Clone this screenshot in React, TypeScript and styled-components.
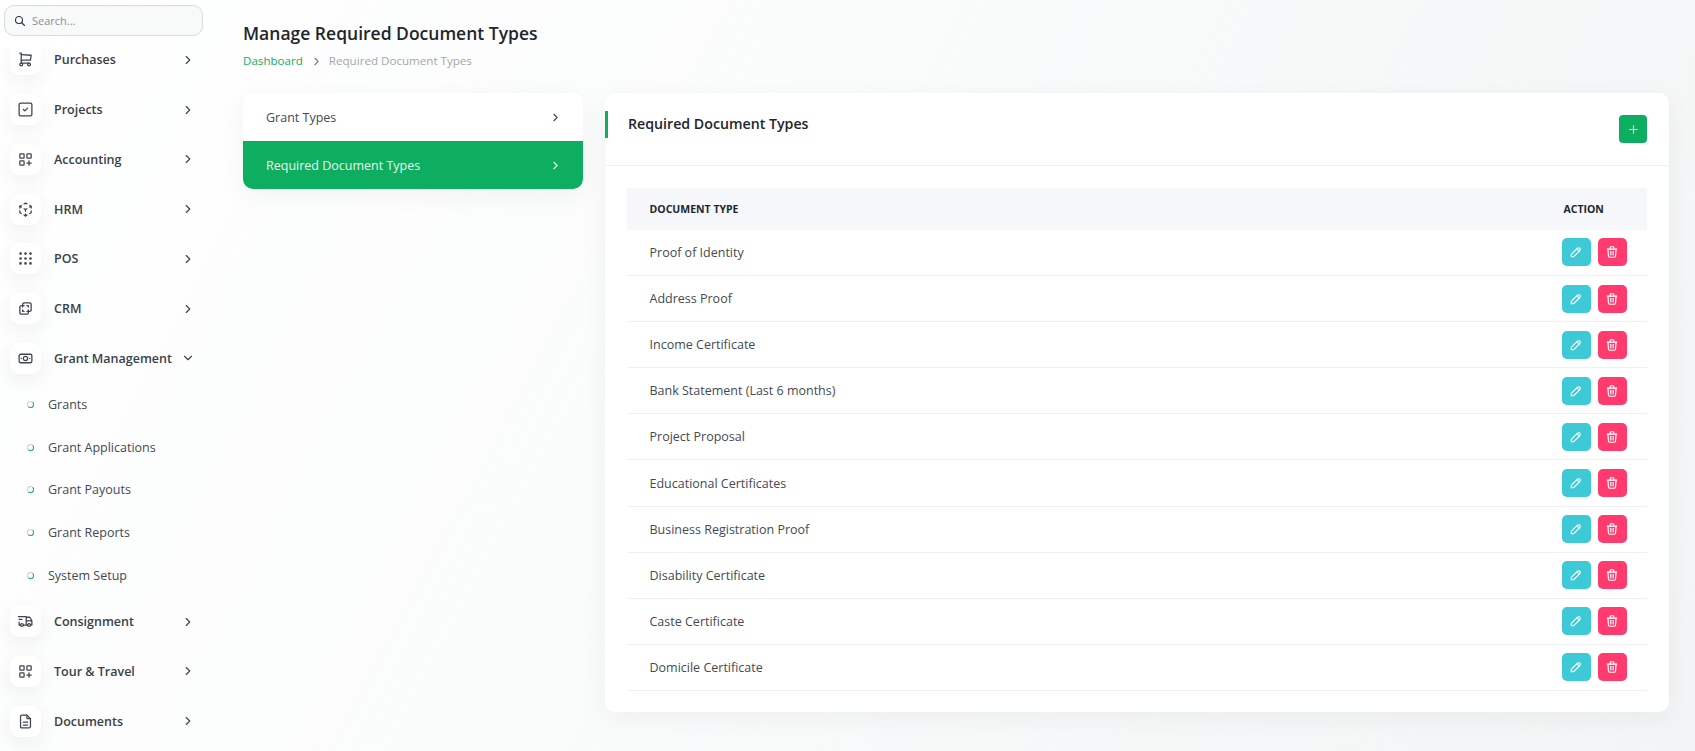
import React from "react";
import styled, { createGlobalStyle } from "styled-components";
import {
  TbShoppingCart, TbSquareCheck, TbLayoutGridAdd, TbCube3dSphere, TbGridDots, TbLayersDifference,
  TbCashBanknote, TbTruckDelivery, TbFileDescription, TbChevronRight, TbChevronDown, TbSearch,
  TbPencil, TbTrash, TbPlus,
} from "react-icons/tb";

const Global = createGlobalStyle`
  html, body { margin: 0; padding: 0; height: 100%; }
  body { font-family: "Open Sans", sans-serif; color: #293240; overflow: hidden; }
  * { box-sizing: border-box; }
`;

const Page = styled.div`
  width: 1695px; height: 751px; display: flex; overflow: hidden;
  background: linear-gradient(118deg, #ffffff 0%, #fafbfb 42%, #f2f4f5 100%);
`;
const Sidebar = styled.aside`
  width: 243px; flex: none; height: 751px; display: flex; flex-direction: column; padding-top: 5px;
`;
const SearchBox = styled.div`
  margin-left: 4px; width: 199px; height: 31px; flex: none; display: flex; align-items: center; gap: 6px; padding-left: 9px;
  border: 1px solid #d8dadb; border-radius: 10px; background: #f8f9f9; color: #8a9096; font-size: 11px;
  svg { color: #293240; }
`;
const NavClip = styled.div`
  flex: 1; overflow: hidden; margin-top: 12px;
`;
const Nav = styled.nav`
  margin-top: -13px; display: flex; flex-direction: column;
`;
const NavRow = styled.div`
  height: 49.75px; display: flex; align-items: center; padding-left: 10px; position: relative;
`;
const IconBox = styled.span`
  width: 31px; height: 31px; flex: none; border-radius: 9px; background: #fff; display: flex; align-items: center; justify-content: center;
  box-shadow: 0 6px 20px rgba(40, 50, 60, 0.07); color: #3f4650;
`;
const NavLabel = styled.span`
  margin-left: 13px; font-size: 12.5px; font-weight: 600; color: #3a4048; width: 127px; white-space: nowrap;
`;
const Caret = styled.span`
  display: flex; color: #3f4650;
`;
const SubList = styled.div`
  display: flex; flex-direction: column;
`;
const SubRow = styled.div`
  height: 42.7px; display: flex; align-items: center; padding-left: 27px; font-size: 12.5px; color: #444a52; gap: 14px;
`;
const Bullet = styled.span`
  width: 7px; height: 7px; flex: none; border-radius: 50%; border: 1.5px solid #c9d0cd; border-bottom-color: #12ad5f; border-right-color: #12ad5f;
`;
const Main = styled.main`
  flex: 1; padding: 21px 26px 0 0; min-width: 0;
`;
const Title = styled.h1`
  margin: 0; font-size: 17.5px; line-height: 24px; font-weight: 600; color: #22262c;
`;
const Crumbs = styled.div`
  display: flex; align-items: center; margin-top: 8px; font-size: 11.6px; line-height: 16px; color: #a3a8ad;
`;
const CrumbLink = styled.span`
  color: #12ad5f;
`;
const CrumbSep = styled.span`
  display: flex; margin: 0 6px 0 7px; color: #777d83;
`;
const Columns = styled.div`
  display: flex; gap: 22px; margin-top: 24px; align-items: flex-start;
`;
const Tabs = styled.div`
  width: 340px; flex: none; border-radius: 10px; overflow: hidden; background: #fff;
  box-shadow: 0 6px 24px rgba(40, 50, 60, 0.05);
`;
const Tab = styled.div<{ $active?: boolean }>`
  height: 48px; display: flex; align-items: center; justify-content: space-between; padding: 0 21px 0 23px;
  font-size: 12.5px; background: ${(p) => (p.$active ? "#0eae60" : "#fff")}; color: ${(p) => (p.$active ? "#e5f6ed" : "#444a52")};
  svg { color: ${(p) => (p.$active ? "#e5f6ed" : "#3f4650")}; }
`;
const Card = styled.section`
  flex: 1; min-width: 0; height: 619px; background: #fff; border-radius: 10px;
  box-shadow: 0 6px 24px rgba(40, 50, 60, 0.05);
`;
const CardHead = styled.header`
  height: 73px; display: flex; justify-content: space-between; padding: 22px 22px 0 23px; position: relative; border-bottom: 1px solid #f0f1f2;
  &::before { content: ""; position: absolute; left: 0; top: 18px; width: 3px; height: 27px; background: #12ad5f; }
`;
const CardTitle = styled.h2`
  margin: 0; font-size: 14.2px; line-height: 18px; font-weight: 600; color: #22262c;
`;
const AddButton = styled.button`
  width: 28px; height: 28px; border: 0; padding: 0; border-radius: 4px; background: #0eae60; color: #e9f8f0;
  display: flex; align-items: center; justify-content: center;
`;
const TableWrap = styled.div`
  padding: 21.5px 22px 0;
`;
const Table = styled.table`
  width: 100%; border-collapse: collapse;
`;
const Th = styled.th<{ $action?: boolean }>`
  height: 42px; padding: 0 0 0 ${(p) => (p.$action ? "24.5px" : "22.5px")}; text-align: left; background: #f6f7fa; font-size: 10.5px; font-weight: 700; color: #22262c;
  text-transform: uppercase; width: ${(p) => (p.$action ? "108px" : "auto")};
`;
const Row = styled.tr`
  height: 46.1px; border-bottom: 1px solid #f0f1f2;
`;
const Td = styled.td`
  padding: 0 0 0 22.5px; font-size: 12.5px; color: #444a52;
`;
const Actions = styled.div`
  display: flex; gap: 7px;
`;
const ActionButton = styled.button<{ $tone: string }>`
  width: 29px; height: 28px; padding: 0; border: 0; border-radius: 5px; background: ${(p) => p.$tone}; color: #fff;
  display: flex; align-items: center; justify-content: center;
`;

const before = [
  ["Purchases", TbShoppingCart], ["Projects", TbSquareCheck], ["Accounting", TbLayoutGridAdd],
  ["HRM", TbCube3dSphere], ["POS", TbGridDots], ["CRM", TbLayersDifference],
] as const;
const after = [
  ["Consignment", TbTruckDelivery], ["Tour & Travel", TbLayoutGridAdd], ["Documents", TbFileDescription],
] as const;
const subs = ["Grants", "Grant Applications", "Grant Payouts", "Grant Reports", "System Setup"];
const docs = [
  "Proof of Identity", "Address Proof", "Income Certificate", "Bank Statement (Last 6 months)", "Project Proposal",
  "Educational Certificates", "Business Registration Proof", "Disability Certificate", "Caste Certificate", "Domicile Certificate",
];

function Item({ label, Icon, open }: { label: string; Icon: React.ComponentType<{ size?: number; strokeWidth?: number }>; open?: boolean }) {
  return (
    <NavRow>
      <IconBox><Icon size={17} strokeWidth={1.8} /></IconBox>
      <NavLabel>{label}</NavLabel>
      <Caret>{open ? <TbChevronDown size={14} /> : <TbChevronRight size={14} />}</Caret>
    </NavRow>
  );
}

export default function App() {
  return (
    <Page>
      <Global />
      <Sidebar>
        <SearchBox><TbSearch size={12} strokeWidth={2.2} />Search...</SearchBox>
        <NavClip>
          <Nav>
            {before.map(([l, I]) => <Item key={l} label={l} Icon={I} />)}
            <Item label="Grant Management" Icon={TbCashBanknote} open />
            <SubList>
              {subs.map((s) => <SubRow key={s}><Bullet />{s}</SubRow>)}
            </SubList>
            {after.map(([l, I]) => <Item key={l} label={l} Icon={I} />)}
          </Nav>
        </NavClip>
      </Sidebar>
      <Main>
        <Title>Manage Required Document Types</Title>
        <Crumbs>
          <CrumbLink>Dashboard</CrumbLink>
          <CrumbSep><TbChevronRight size={13} /></CrumbSep>
          Required Document Types
        </Crumbs>
        <Columns>
          <Tabs>
            <Tab>Grant Types<TbChevronRight size={13} /></Tab>
            <Tab $active>Required Document Types<TbChevronRight size={13} /></Tab>
          </Tabs>
          <Card>
            <CardHead>
              <CardTitle>Required Document Types</CardTitle>
              <AddButton><TbPlus size={13} /></AddButton>
            </CardHead>
            <TableWrap>
              <Table>
                <thead>
                  <tr><Th>Document Type</Th><Th $action>Action</Th></tr>
                </thead>
                <tbody>
                  {docs.map((d) => (
                    <Row key={d}>
                      <Td>{d}</Td>
                      <Td>
                        <Actions>
                          <ActionButton $tone="#3ec9d6"><TbPencil size={14} /></ActionButton>
                          <ActionButton $tone="#ff3a6e"><TbTrash size={14} /></ActionButton>
                        </Actions>
                      </Td>
                    </Row>
                  ))}
                </tbody>
              </Table>
            </TableWrap>
          </Card>
        </Columns>
      </Main>
    </Page>
  );
}
